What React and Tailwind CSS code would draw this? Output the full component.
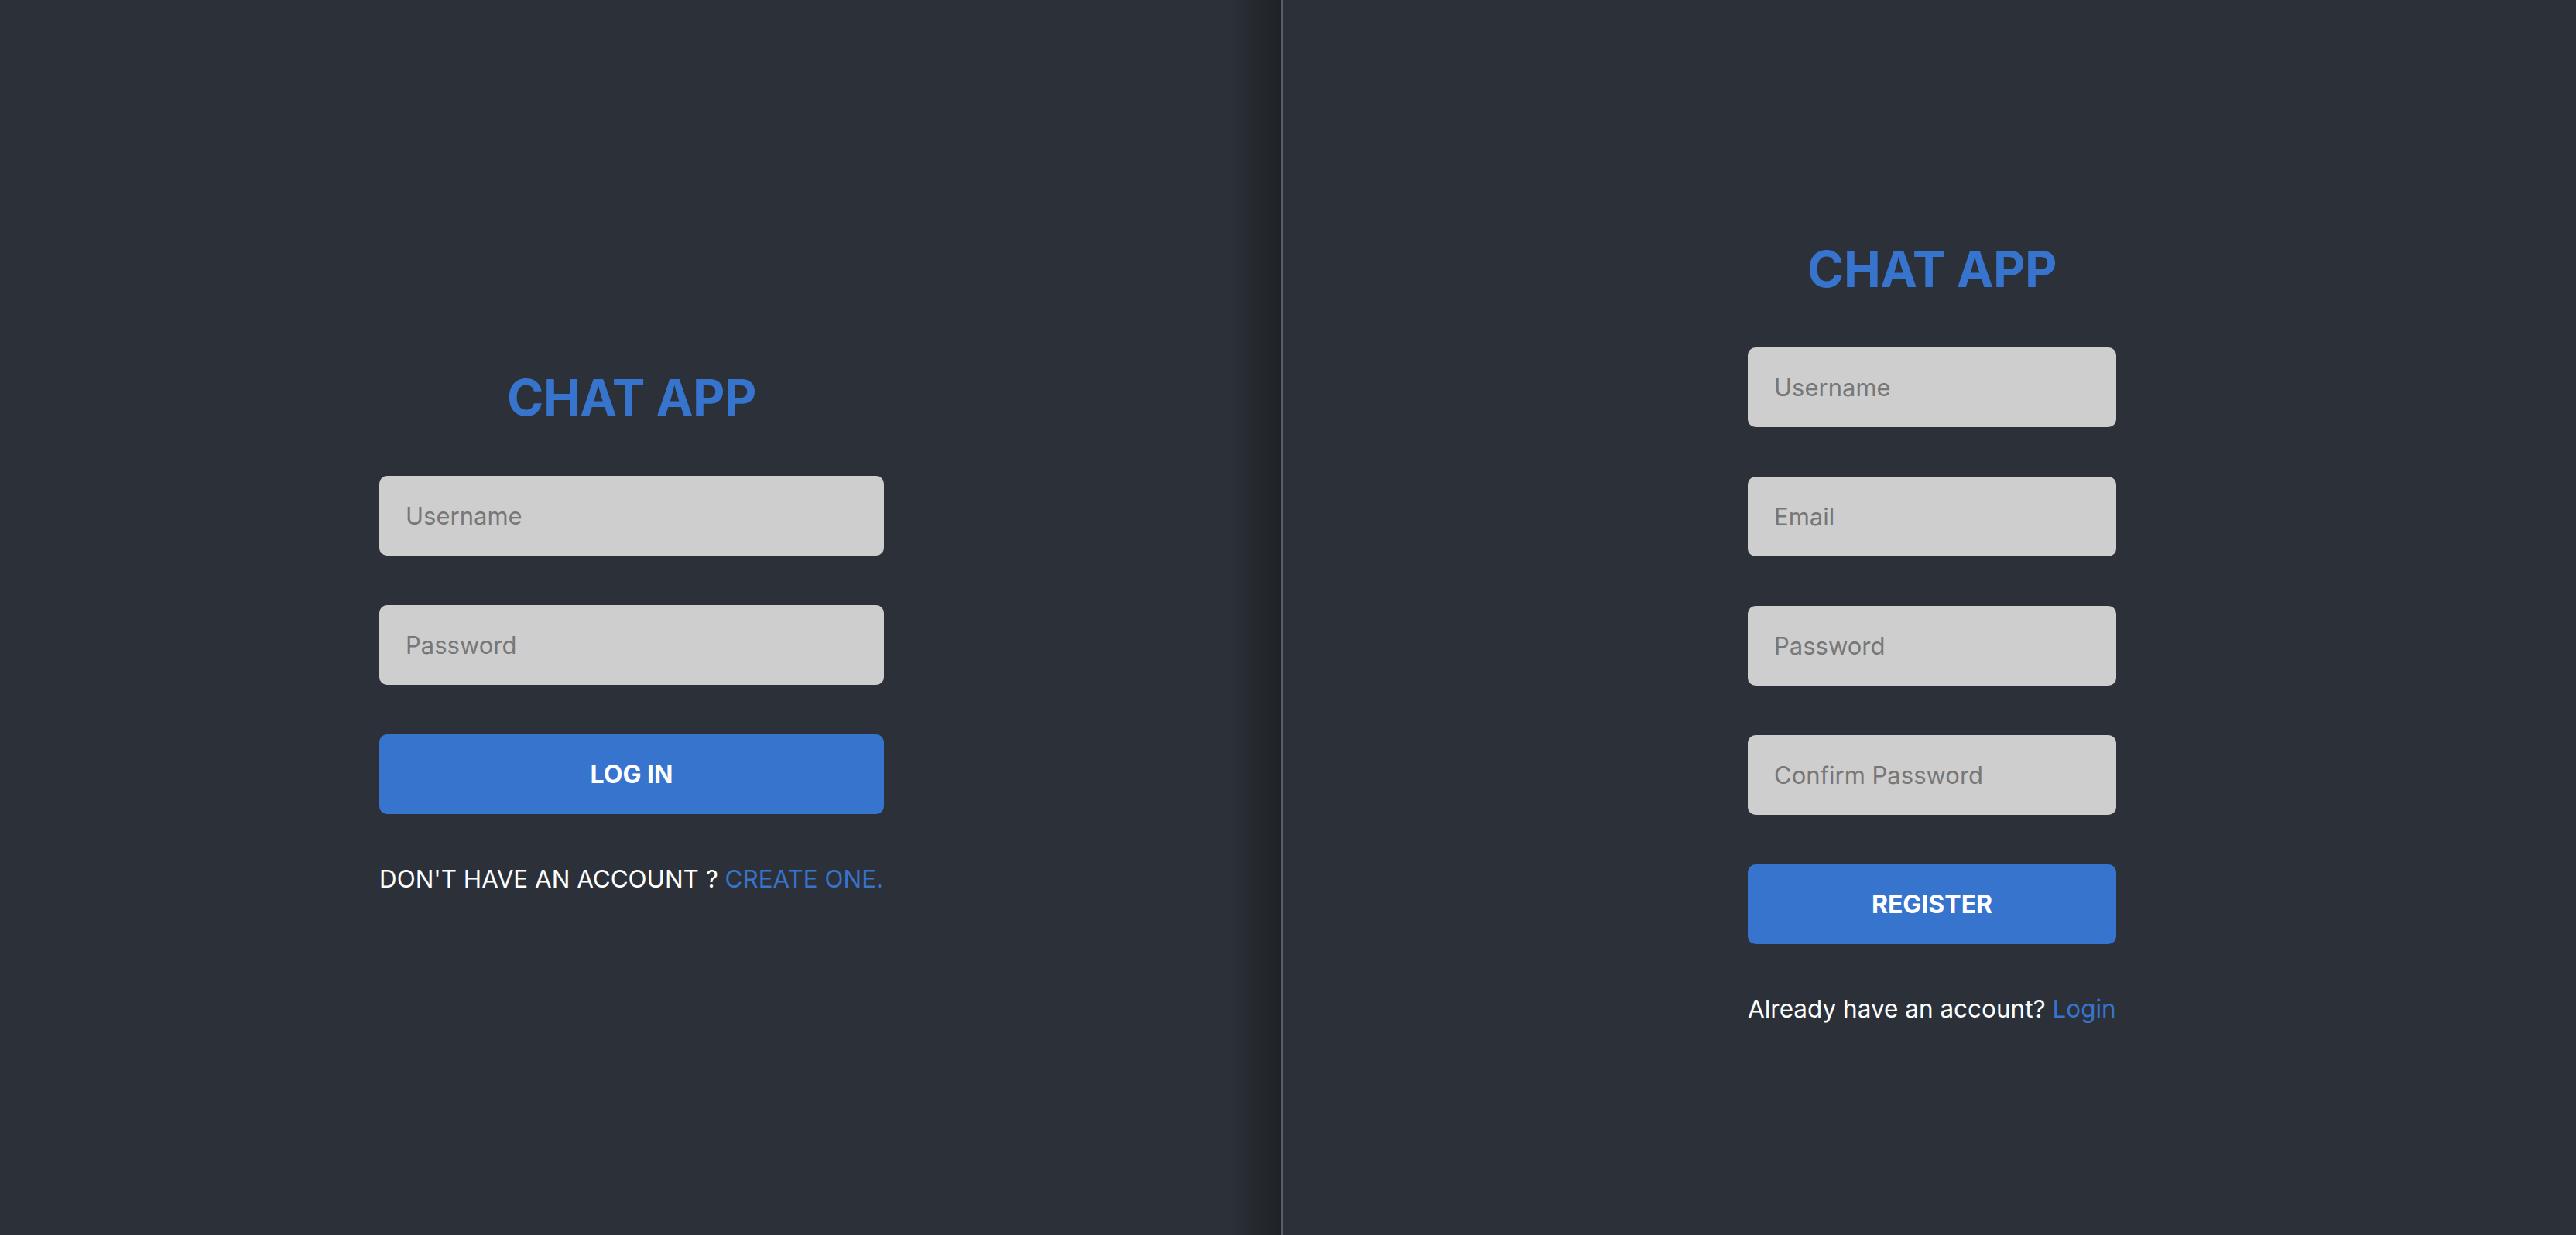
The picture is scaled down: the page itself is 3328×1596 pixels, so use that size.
import React from 'react';

const Field = ({ placeholder, type = 'text' }) => (
  <input
    type={type}
    placeholder={placeholder}
    className="h-[103px] w-full rounded-[10px] bg-[#cecece] px-[34px] text-[31px] text-[#333] outline-none placeholder:text-[#777]"
  />
);

const SubmitButton = ({ children }) => (
  <button
    type="submit"
    className="h-[103px] w-full rounded-[10px] bg-[#3674cd] text-[32px] font-bold text-white"
  >
    {children}
  </button>
);

const Title = () => (
  <h1 className="mb-[69px] text-[64px] font-bold leading-none tracking-[-0.5px] text-[#3674cd]">CHAT APP</h1>
);

const LoginForm = () => (
  <form onSubmit={(e) => e.preventDefault()} className="flex w-[652px] flex-col items-center">
    <Title />
    <div className="flex w-full flex-col gap-[64px]">
      <Field placeholder="Username" />
      <Field placeholder="Password" type="password" />
      <SubmitButton>LOG IN</SubmitButton>
    </div>
    <p className="mt-[69px] w-full whitespace-nowrap text-[31.4px] leading-none text-white">
      DON'T HAVE AN ACCOUNT ? <span className="text-[#3674cd]">CREATE ONE.</span>
    </p>
  </form>
);

const RegisterForm = () => (
  <form onSubmit={(e) => e.preventDefault()} className="flex w-[476px] flex-col items-center">
    <Title />
    <div className="flex w-full flex-col gap-[64px]">
      <Field placeholder="Username" />
      <Field placeholder="Email" type="email" />
      <Field placeholder="Password" type="password" />
      <Field placeholder="Confirm Password" type="password" />
      <SubmitButton>REGISTER</SubmitButton>
    </div>
    <p className="mt-[68px] w-full whitespace-nowrap text-[31.5px] leading-none text-white">
      Already have an account? <span className="text-[#3674cd]">Login</span>
    </p>
  </form>
);

export default function App() {
  return (
    <div className="flex h-screen w-full overflow-hidden bg-[#2c3038] font-[Inter,sans-serif]">
      {/* login screen */}
      <div className="relative flex w-[1654px] shrink-0 items-center justify-center pr-[22px] pt-[39px]">
        <LoginForm />
        <div className="pointer-events-none absolute inset-y-0 right-0 w-[68px] bg-gradient-to-r from-transparent to-[#1f2327]" />
      </div>

      {/* divider */}
      <div className="w-px shrink-0 bg-[#1b1d20]" />
      <div className="w-[3px] shrink-0 bg-[#5a5e65]" />

      {/* register screen */}
      <div className="flex flex-1 items-center justify-center pl-[6px] pt-[40px]">
        <RegisterForm />
      </div>
    </div>
  );
}
